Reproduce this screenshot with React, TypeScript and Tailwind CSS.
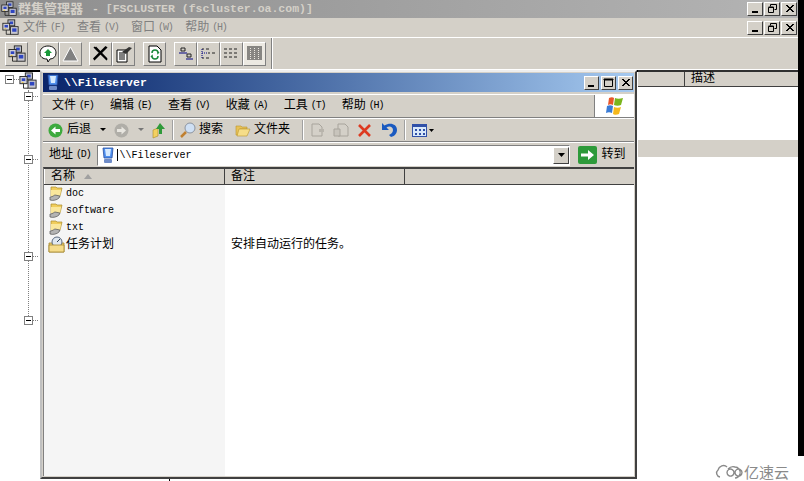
import React from "react";

const FONT = { fontFamily: '"Liberation Mono","Noto Sans CJK SC",monospace' };

const raisedBtn = "border border-t-white border-l-white border-r-[#404040] border-b-[#404040] bg-[#d4d0c8]";

function WinBtn({ kind, wide }: { kind: "min" | "max" | "restore" | "close"; wide?: boolean }) {
  return (
    <div className={`h-[14px] flex items-center justify-center ${wide ? "w-[16px]" : "w-[15px]"} ${raisedBtn}`}>
      <svg width="11" height="10" viewBox="0 0 11 10">
        {kind === "min" && <rect x="2" y="7" width="6" height="2" fill="#000" />}
        {kind === "max" && <path d="M1.5 1.5h8v7h-8z M1 1h9v1H1z" fill="none" stroke="#000" />}
        {kind === "restore" && <path d="M3.500 0.500h6v5h-2 M3.500 0.500v2 M1.500 3.500h5v5h-5z M1.500 3h5v1" fill="none" stroke="#000" />}
        {kind === "close" && <path d="M2 1l7 7M3 1l7 7M9 1L2 8M10 1L3 8" stroke="#000" fill="none" />}
      </svg>
    </div>
  );
}

function ServersIcon({ size = 20 }: { size?: number }) {
  return (
    <svg width={size} height={size} viewBox="0 0 20 20">
      <rect x="7" y="1" width="8" height="7" fill="#b8bcc8" stroke="#222" />
      <rect x="9" y="3" width="4" height="3" fill="#2f46c0" />
      <rect x="1" y="5" width="8" height="8" fill="#d0d0d8" stroke="#222" />
      <rect x="3" y="7" width="4" height="3" fill="#2f46c0" />
      <rect x="10" y="9" width="9" height="9" fill="#c8c8d0" stroke="#222" />
      <rect x="12" y="11" width="5" height="4" fill="#2f46c0" />
      <path d="M5 13v5h5" stroke="#222" fill="none" />
      <rect x="3" y="11" width="2" height="1" fill="#e8c020" />
    </svg>
  );
}

function ToolBtn({ children, active }: { children: React.ReactNode; active?: boolean }) {
  return (
    <div className={`w-[23px] h-[24px] flex items-center justify-center border border-t-white border-l-white border-r-[#808080] border-b-[#808080] ${active ? "bg-[#ece9e2]" : "bg-[#d4d0c8]"}`}>
      {children}
    </div>
  );
}

function TreeBox({ className }: { className: string }) {
  return (
    <div className={`absolute flex items-center ${className}`}>
      <div className="w-[9px] h-[9px] border border-[#808080] bg-white flex items-center justify-center">
        <div className="w-[5px] h-px bg-black" />
      </div>
      <div className="w-[5px] border-t border-dotted border-[#808080]" />
    </div>
  );
}

function MonitorIcon() {
  return (
    <svg width="14" height="17" viewBox="0 0 14 17">
      <path d="M2 1h10l-1 10H3z" fill="#4f8fee" stroke="#2a4fa0" strokeWidth="0.8" />
      <path d="M4 2h6l-1 7H5z" fill="#d6eaff" />
      <rect x="3" y="12" width="8" height="4" rx="1" fill="#6f8cc8" />
    </svg>
  );
}

function SharedFolder() {
  return (
    <svg width="16" height="16" viewBox="0 0 16 16">
      <path d="M3 1h5l1 1h5l-2 8H3z" fill="#f0cd5c" stroke="#a98b2c" strokeWidth="0.7" />
      <path d="M3 4h10l-1 6H3z" fill="#fae79c" />
      <path d="M2 11c3 0 4-2 5-2l5 1-1 2c-2 2-6 3-9 2z" fill="#b4b4b4" stroke="#555" strokeWidth="0.7" />
    </svg>
  );
}

function Tasks() {
  return (
    <svg width="17" height="17" viewBox="0 0 17 17">
      <path d="M1 7h15v9H1z" fill="#f1d271" stroke="#a3862c" strokeWidth="0.8" />
      <circle cx="9" cy="6" r="5" fill="#dfe7ef" stroke="#5b6a80" />
      <path d="M9 6l3-3" stroke="#345" />
      <path d="M1 9h15v7H1z" fill="#f5dc8b" stroke="#a3862c" strokeWidth="0.8" />
    </svg>
  );
}

function XpFlag() {
  return (
    <svg width="21" height="20" viewBox="0 0 21 20">
      <path d="M5 2c2-1 4-1 5 0l-1 7c-2-1-3-1-5 0z" fill="#e8562a" />
      <path d="M11 2c2 1 5 1 8 0l-2 7c-2 1-5 1-7 0z" fill="#7ab51d" />
      <path d="M3 10c2-1 4-1 6 0l-1 7c-2-1-4-1-6 0z" fill="#3a7bd5" />
      <path d="M10 11c2 1 5 1 7 0l-2 7c-2 1-5 1-6 0z" fill="#f5b81c" />
    </svg>
  );
}

const SEP = <div className="w-[2px] h-[20px] border-l border-r border-l-[#a0a0a0] border-r-white" />;

function Label({ cjk, hot }: { cjk: string; hot: string }) {
  return (
    <span className="whitespace-nowrap flex items-center">
      <span>{cjk}</span>
      <span className="ml-[3px] text-[10px] tracking-[-1.2px]">({hot})</span>
    </span>
  );
}

export default function App() {
  return (
    <div className="relative w-[804px] h-[481px] bg-white overflow-hidden text-[12px] leading-none text-black" style={FONT}>
      {/* Main MMC application */}
      <div className="flex flex-col w-[798px] h-[456px]">
        <div className="h-[18px] bg-gradient-to-r from-[#8e8e8e] to-[#b4b4b4] flex items-center pl-[1px] shrink-0">
          <ServersIcon size={16} />
          <span className="ml-[1px] text-[#d4d0c8] font-bold text-[13px] whitespace-nowrap">群集管理器</span>
          <span className="ml-[9px] text-[#d4d0c8] font-bold text-[11.5px] whitespace-nowrap">- [FSCLUSTER (fscluster.oa.com)]</span>
          <div className="ml-auto flex gap-[1px] mr-[1px]">
            <WinBtn wide kind="min" /><WinBtn wide kind="restore" /><WinBtn wide kind="close" />
          </div>
        </div>
        <div className="h-[20px] bg-[#d4d0c8] flex items-center pl-[2px] border-b border-white shrink-0 text-[#808080]">
          <ServersIcon size={17} />
          <div className="ml-[4px] flex gap-[12.6px]">
            <Label cjk="文件" hot="F" /><Label cjk="查看" hot="V" /><Label cjk="窗口" hot="W" /><Label cjk="帮助" hot="H" />
          </div>
          <div className="ml-auto flex gap-[1px] mr-[1px]">
            <WinBtn wide kind="min" /><WinBtn wide kind="restore" /><WinBtn wide kind="close" />
          </div>
        </div>
        <div className="h-[32px] bg-[#d4d0c8] flex items-center pl-[5px] border-b border-white shrink-0">
          <ToolBtn><ServersIcon size={18} /></ToolBtn>
          <div className="ml-[8px] flex">
            <ToolBtn>
              <svg width="18" height="18" viewBox="0 0 18 18"><path d="M9 1c5 0 8 3 8 7s-3 6-6 6l-2 3-1-3c-4 0-7-2-7-6s3-7 8-7z" fill="#fff" stroke="#111" /><path d="M9 4l4 4h-2v3H7V8H5z" fill="#1a9a3a" /></svg>
            </ToolBtn>
            <ToolBtn>
              <svg width="17" height="16" viewBox="0 0 17 16"><path d="M8.500 1L16 15H1z" fill="#808080" stroke="#fff" /></svg>
            </ToolBtn>
          </div>
          <div className="ml-[7px] flex">
            <ToolBtn>
              <svg width="17" height="17" viewBox="0 0 17 17"><path d="M2 2l13 13M3.500 2L15 14M15 2L2 15M14 1.500L1.500 14" stroke="#000" strokeWidth="1.5" /></svg>
            </ToolBtn>
            <ToolBtn>
              <svg width="18" height="18" viewBox="0 0 18 18"><path d="M2 5h10v12H2z" fill="#fff" stroke="#000" /><path d="M4 8h6M4 10h6M4 12h6M4 14h6" stroke="#000" /><path d="M7 7l7-5 3 1-6 6z" fill="#333" /></svg>
            </ToolBtn>
          </div>
          <div className="ml-[8px]">
            <ToolBtn>
              <svg width="14" height="18" viewBox="0 0 14 18"><path d="M1 1h8l4 4v12H1z" fill="#fff" stroke="#000" /><path d="M4 8a3 3 0 0 1 6 0l1-1M10 11a3 3 0 0 1-6 0L3 12" stroke="#1a8a3a" fill="none" strokeWidth="1.5" /></svg>
            </ToolBtn>
          </div>
          <div className="ml-[8px] flex">
            <ToolBtn>
              <svg width="17" height="14" viewBox="0 0 17 14"><path d="M4 1h4v3H4z" fill="none" stroke="#222" /><path d="M2 6h8" stroke="#000080" /><path d="M10 7h4v3h-4z" fill="none" stroke="#222" /><path d="M9 12h7" stroke="#000080" /></svg>
            </ToolBtn>
            <ToolBtn>
              <svg width="17" height="14" viewBox="0 0 17 14"><path d="M2 2h2M6 2h3M8 6h2M12 6h3M2 11h2M6 11h3" stroke="#222" /><path d="M2 2v9M2 6h6" stroke="#000080" strokeDasharray="1 1" /></svg>
            </ToolBtn>
            <ToolBtn>
              <svg width="17" height="14" viewBox="0 0 17 14"><path d="M1 2h3M6 2h3M11 2h3M1 6h3M6 6h3M11 6h3M1 10h3M6 10h3M11 10h3" stroke="#222" /></svg>
            </ToolBtn>
            <ToolBtn active>
              <svg width="17" height="15" viewBox="0 0 17 15"><path d="M1 1h15M1 3h15M1 5h15M1 7h15M1 9h15M1 11h15M1 13h15" stroke="#222" /><path d="M4.500 2v12M8.500 2v12M12.500 2v12" stroke="#ece9e2" strokeDasharray="1 1" /></svg>
            </ToolBtn>
          </div>
          <div className="ml-[5px] w-[2px] h-[31px] border-l border-r border-l-[#808080] border-r-white" />
        </div>
        {/* Lower panes */}
        <div className="flex-1 flex min-h-0">
          <div className="relative w-[638px] shrink-0 bg-white border-t-2 border-t-black">
            <div className="absolute left-[5px] top-[3px] w-[9px] h-[9px] border border-[#808080] flex items-center justify-center">
              <div className="w-[5px] h-px bg-black" />
            </div>
            <div className="absolute left-[14px] top-[7px] w-[5px] border-t border-dotted border-[#808080]" />
            <div className="absolute left-[19px] top-[0px]"><ServersIcon size={18} /></div>
            <div className="absolute left-[28px] top-[18px] h-[232px] border-l border-dotted border-[#808080]" />
            <TreeBox className="left-[24px] top-[20px]" />
            <TreeBox className="left-[24px] top-[83px]" />
            <TreeBox className="left-[24px] top-[180px]" />
            <TreeBox className="left-[24px] top-[244px]" />
          </div>
          <div className="flex-1 flex flex-col min-w-0 bg-white">
            <div className="h-[17px] bg-[#d4d0c8] border-t-2 border-t-[#303030] border-b border-b-[#404040] flex shrink-0">
              <div className="w-[47px] border-r border-r-[#404040]" />
              <span className="ml-[6px] leading-[15px]">描述</span>
            </div>
            <div className="h-[53px] shrink-0" />
            <div className="h-[17px] bg-[#d4d0c8] shrink-0" />
          </div>
        </div>
      </div>
      {/* black strip on the right */}
      <div className="absolute top-0 right-0 w-[6px] h-[456px] bg-black" />
      {/* sliver of the pointer under the window */}
      <div className="absolute left-[169px] top-[479px] w-px h-[2px] bg-black" />

      {/* Floating explorer window */}
      <div className="absolute left-[40px] top-[70px] w-[597px] h-[409px] bg-[#d4d0c8] border-t-2 border-l-2 border-t-[#eeeeee] border-l-[#c0c0c0] border-r-2 border-b-2 border-r-[#404040] border-b-[#404040] p-[1px] flex flex-col">
        <div className="h-[19px] shrink-0 bg-gradient-to-r from-[#0a246a] to-[#a6caf0] flex items-center pl-[3px]">
          <MonitorIcon />
          <span className="ml-[4px] text-white font-bold text-[11.5px] whitespace-nowrap">\\Fileserver</span>
          <div className="ml-auto flex gap-[2px] mr-[1px]">
            <WinBtn kind="min" /><WinBtn kind="max" /><WinBtn kind="close" />
          </div>
        </div>
        <div className="h-[24px] mt-[2px] shrink-0 flex border-b border-b-[#808080] border-t border-t-white">
          <div className="flex-1 flex items-center pl-[9px] gap-[16.5px]">
            <Label cjk="文件" hot="F" /><Label cjk="编辑" hot="E" /><Label cjk="查看" hot="V" /><Label cjk="收藏" hot="A" /><Label cjk="工具" hot="T" /><Label cjk="帮助" hot="H" />
          </div>
          <div className="w-[40px] bg-white flex items-center justify-center border-l border-l-[#808080]"><XpFlag /></div>
        </div>
        <div className="h-[24px] shrink-0 flex items-center pl-[5px] border-b border-b-[#808080] border-t border-t-white">
          <svg width="15" height="15" viewBox="0 0 15 15"><circle cx="7.500" cy="7.500" r="7" fill="#3eaa3e" /><path d="M3 7.500L7.500 3.500v2.500H12v3H7.500v2.500z" fill="#fff" /></svg>
          <span className="ml-[4px]">后退</span>
          <svg className="ml-[9px]" width="6" height="4" viewBox="0 0 6 4"><path d="M0 0h6L3 3z" fill="#000" /></svg>
          <svg className="ml-[8px]" width="15" height="15" viewBox="0 0 15 15"><circle cx="7.500" cy="7.500" r="7" fill="#b0aea8" /><path d="M12 7.500L7.500 3.500v2.500H3v3h4.500v2.500z" fill="#e8e6e0" /></svg>
          <svg className="ml-[9px]" width="6" height="4" viewBox="0 0 6 4"><path d="M0 0h6L3 3z" fill="#777" /></svg>
          <svg className="ml-[7px]" width="16" height="17" viewBox="0 0 16 17"><path d="M2 8l5-2v8l-5 2z" fill="#f3d060" stroke="#a88a28" strokeWidth="0.6" /><path d="M9 1l5 6h-3v5H8V7H5z" fill="#2f9a3a" /></svg>
          <div className="ml-[5px]">{SEP}</div>
          <svg className="ml-[6px]" width="17" height="17" viewBox="0 0 17 17"><circle cx="10" cy="6" r="5" fill="#cfe0f4" stroke="#8c94a0" /><path d="M6 10l-5 5" stroke="#c08030" strokeWidth="2.5" /></svg>
          <span className="ml-[2px]">搜索</span>
          <svg className="ml-[12px]" width="16" height="14" viewBox="0 0 16 14"><path d="M1 3h5l1 1h5v2H5L3 12H1z" fill="#e8c258" stroke="#b8962e" strokeWidth="0.6" /><path d="M4 6h11l-3 7H2z" fill="#f6dd88" stroke="#b8962e" strokeWidth="0.6" /></svg>
          <span className="ml-[3px]">文件夹</span>
          <div className="ml-[12px]">{SEP}</div>
          <svg className="ml-[6px]" width="16" height="15" viewBox="0 0 16 15"><path d="M2 1h7l3 3v9H2z" fill="#d4d0c8" stroke="#a8a49c" /><path d="M9 6h5v3H9z" fill="#b8b4ac" /></svg>
          <svg className="ml-[7px]" width="17" height="15" viewBox="0 0 17 15"><path d="M5 1h7l3 3v9H5z" fill="#d4d0c8" stroke="#a8a49c" /><path d="M1 6h6v7H1z" fill="#c8c4bc" stroke="#a8a49c" /></svg>
          <svg className="ml-[7px]" width="15" height="15" viewBox="0 0 15 15"><path d="M2 2l11 11M13 2L2 13" stroke="#dd3a20" strokeWidth="2.6" /></svg>
          <svg className="ml-[9px]" width="17" height="16" viewBox="0 0 17 16"><path d="M1 1v7h7L5.500 5.500C8 3.500 12 4.500 12 8c0 2-1.500 4-4 5l2 2c4-1 6-4 6-7 0-6-7-8-12.500-4.500z" fill="#1a5ac0" /></svg>
          <div className="ml-[6px]">{SEP}</div>
          <svg className="ml-[6px]" width="15" height="13" viewBox="0 0 15 13"><rect x="0.500" y="0.500" width="14" height="12" fill="#d8e8fa" stroke="#3050a8" /><path d="M1 1h13v2H1z" fill="#3050a8" /><path d="M3 5h2v2H3zM7 5h2v2H7zM11 5h2v2h-2zM3 9h2v2H3zM7 9h2v2H7zM11 9h2v2h-2z" fill="#3050a8" /></svg>
          <svg className="ml-[2px]" width="5" height="3" viewBox="0 0 5 3"><path d="M0 0h5L2.500 3z" fill="#000" /></svg>
        </div>
        <div className="h-[25px] shrink-0 flex items-center pl-[6px] border-t border-t-white">
          <Label cjk="地址" hot="D" />
          <div className="ml-[7px] w-[473px] h-[21px] bg-white flex items-center border border-t-[#808080] border-l-[#808080] border-r-white border-b-white pl-[3px]">
            <MonitorIcon />
            <span className="ml-[2px] w-px h-[12px] bg-black" />
            <span className="ml-[1px] pt-[1px] text-[10px] whitespace-nowrap">\\Fileserver</span>
            <div className={`ml-auto w-[16px] h-[17px] flex items-center justify-center ${raisedBtn}`}>
              <svg width="7" height="4" viewBox="0 0 7 4"><path d="M0 0h7L3.500 4z" fill="#000" /></svg>
            </div>
          </div>
          <svg className="ml-[8px]" width="19" height="18" viewBox="0 0 19 18"><rect width="19" height="18" rx="2" fill="#2d9a3a" /><path d="M3 7.500h7V4l6 5-6 5v-3.500H3z" fill="#fff" /></svg>
          <span className="ml-[4px]">转到</span>
        </div>
        <div className="flex-1 min-h-0 bg-white border-t-2 border-t-[#404040] border-l border-l-[#808080] flex flex-col">
          <div className="h-[16px] shrink-0 flex bg-[#d4d0c8] border-b border-b-[#404040]">
            <div className="w-[181px] flex items-center pl-[6px] border-r border-r-[#404040] border-l border-l-white">
              <span>名称</span>
              <svg className="ml-[9px]" width="8" height="5" viewBox="0 0 8 5"><path d="M4 0l4 5H0z" fill="#a0a0a0" /></svg>
            </div>
            <div className="w-[180px] flex items-center pl-[6px] border-r border-r-[#404040]">备注</div>
          </div>
          <div className="flex-1 min-h-0 flex">
            <div className="w-[181px] bg-[#f5f5f5] pl-[4px] flex flex-col shrink-0">
              {["doc", "software", "txt"].map((n) => (
                <div key={n} className="h-[17px] flex items-center gap-[2px]">
                  <SharedFolder />
                  <span className="text-[10px]">{n}</span>
                </div>
              ))}
              <div className="h-[17px] flex items-center gap-[1px]">
                <Tasks />
                <span>任务计划</span>
              </div>
            </div>
            <div className="flex-1 pt-[54px] pl-[6px]">安排自动运行的任务。</div>
          </div>
        </div>
      </div>

      {/* Watermark */}
      <div className="absolute right-[15px] bottom-[2px] flex items-center gap-[1px] text-[#8a8a8a]">
        <svg width="28" height="16" viewBox="0 0 28 16"><path d="M5 14a4 4 0 0 1-2-7c1-4 6-6 9-3 M12 9.500a3.500 3.500 0 1 1 0 .1z M20 9.500a3.500 3.500 0 1 1 0 .1z M13 6c2-2 4-3 7-2 3 0 6 3 5 7-1 3-3 4-5 4" fill="none" stroke="#8a8a8a" strokeWidth="1.4" /></svg>
        <span className="text-[15px]" style={{ fontFamily: '"Noto Sans CJK SC",sans-serif' }}>亿速云</span>
      </div>
    </div>
  );
}
